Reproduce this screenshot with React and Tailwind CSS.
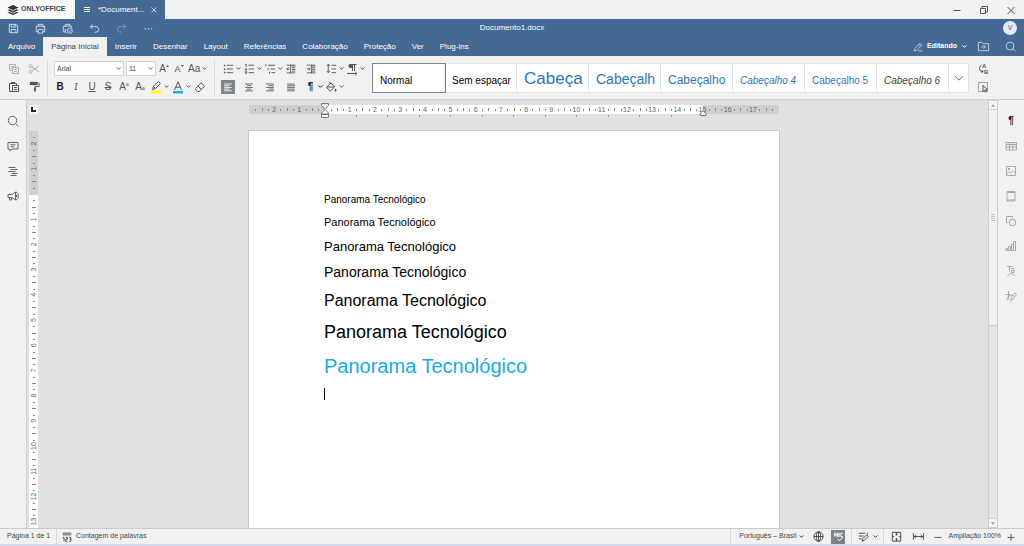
import { useLayoutEffect, useRef, useState } from 'react';
import clsx from 'clsx';

const CM = 25.2;

const menuTabs = [
  'Arquivo',
  'Página Inicial',
  'Inserir',
  'Desenhar',
  'Layout',
  'Referências',
  'Colaboração',
  'Proteção',
  'Ver',
  'Plug-ins',
];

const textStyles = [
  { name: 'Normal', preview: 'Normal', className: 'text-[10px] text-black' },
  { name: 'Sem espaçamento', preview: 'Sem espaçar', className: 'text-[10px] text-black' },
  { name: 'Cabeçalho 1', preview: 'Cabeça', className: 'text-[17px] text-[#2e74b5]' },
  { name: 'Cabeçalho 2', preview: 'Cabeçalh', className: 'text-[14px] text-[#2e74b5]' },
  { name: 'Cabeçalho 3', preview: 'Cabeçalho', className: 'text-[12px] text-[#2e74b5]' },
  { name: 'Cabeçalho 4', preview: 'Cabeçalho 4', className: 'text-[10px] italic text-[#2e74b5]' },
  { name: 'Cabeçalho 5', preview: 'Cabeçalho 5', className: 'text-[10px] text-[#2e74b5]' },
  { name: 'Cabeçalho 6', preview: 'Cabeçalho 6', className: 'text-[10px] italic text-[#404040]' },
];

const paragraphs = [
  'text-[10px] leading-[12px]',
  'text-[11px] leading-[13px]',
  'text-[13px] leading-[15px]',
  'text-[14px] leading-[17px]',
  'text-[16px] leading-[20px]',
  'text-[18px] leading-[23px]',
  'text-[20px] leading-[24px] text-[#17ade4]',
];

function Svg({ size = 14, className, children }) {
  return (
    <svg
      width={size}
      height={size}
      viewBox="0 0 14 14"
      fill="none"
      stroke="currentColor"
      className={clsx('shrink-0', className)}
      aria-hidden="true"
    >
      {children}
    </svg>
  );
}

function Chevron({ className }) {
  return (
    <svg width="5" height="5" viewBox="0 0 5 5" fill="none" stroke="currentColor" className={clsx('shrink-0', className)} aria-hidden="true">
      <path d="M.6 1.4 2.5 3.3 4.4 1.4" />
    </svg>
  );
}

const icons = {
  save: <path d="M2.5 2.5h7.5l1.5 1.5v7.5h-9zM4.5 2.5v3h5v-3M8 3v1.5M4.5 11.5v-3.5h5v3.5" />,
  print: <path d="M4.5 4.5v-2h5v2M4.5 10.5h-2v-6h9v6h-2M4.5 8h5v4h-5zM9.5 6h1" />,
  quickPrint: (
    <>
      <path d="M4.5 4.5v-2h5v2M4.5 10.5h-2v-6h9v2M6 11.5h-1.5v-3.5h1.5" />
      <circle cx="9.5" cy="9.5" r="2.7" />
      <path d="m8.3 9.5 1 1 1.6-1.8" />
    </>
  ),
  undo: <path d="M5 2.5 2.5 5 5 7.5M2.5 5h6a2.7 2.7 0 0 1 0 6H7" />,
  redo: <path d="M9 2.5 11.5 5 9 7.5M11.5 5h-6a2.7 2.7 0 0 0 0 6H7" />,
  dots: <path d="M3 7.5h1.2M6.4 7.5h1.2M9.8 7.5H11" strokeWidth="1.3" />,
  copy: <path d="M5 8.5H2.5v-6h6V5M5.5 5.5h6v6h-6zM7 7.5h3M7 9.5h3M4 4.5h3M4 6.5h1" />,
  cut: (
    <>
      <circle cx="3.6" cy="4.2" r="1.5" />
      <circle cx="3.6" cy="9.8" r="1.5" />
      <path d="m4.9 5 7 5M4.9 9l7-5.2" />
    </>
  ),
  paste: (
    <>
      <path d="M5.5 11.5h-3v-8H4M9.5 5V3.5H8M5.5 5.5h6v6h-6zM7 7.5h3M7 9.5h3" />
      <path d="M4 2h4v2H4z" fill="currentColor" stroke="none" />
    </>
  ),
  roller: (
    <>
      <path d="M2 2h8.5v3.5H2z" fill="currentColor" stroke="none" />
      <path d="M10.5 3.5H12V7H7.5v1.5" />
      <path d="M6.5 8h2v4.5h-2z" fill="currentColor" stroke="none" />
    </>
  ),
  eraser: <path d="M2.5 8.5 8 2.8l3.5 3.4-5.2 5.3H4.6L2.5 9.3zM5 6l3.6 3.5" />,
  bullets: (
    <>
      <path d="M5 3.5h7M5 7.5h7M5 11.5h7" />
      <path d="M2 3h1.5v1.5H2zM2 7h1.5v1.5H2zM2 10.5h1.5V12H2z" fill="currentColor" stroke="none" />
    </>
  ),
  numbering: <path d="M6 3.5h6M6 7.5h6M6 11.5h6M2 2.5h1.5v3M2 7.5h2v1H2M2 10.5h2v1.5H2" />,
  multilevel: <path d="M4.5 3.5h7.5M7 7.5h5M8 11.5h4M2 2.5v2M4.5 6.5v2M6 10.5v2" />,
  outdent: (
    <>
      <path d="M8 3.5h4M8 5.5h4M8 7.5h4M8 9.5h4M6.5 2v10M2 2.5h10M2 11.5h10" />
      <path d="M5.5 7H2M3.8 5.2 2 7l1.8 1.8" />
    </>
  ),
  indent: (
    <>
      <path d="M8 3.5h4M8 5.5h4M8 7.5h4M8 9.5h4M7.5 2v10M2 2.5h10M2 11.5h10" />
      <path d="M2 7h4M4.2 5.2 6 7 4.2 8.8" />
    </>
  ),
  spacing: <path d="M7 3.5h5M7 7.5h5M7 11.5h5M3.5 2.5v9M1.8 4.3l1.7-1.8 1.7 1.8M1.8 9.7l1.7 1.8 1.7-1.8" />,
  left: <path d="M2.5 3.5h9M2.5 5.5h6M2.5 7.5h9M2.5 9.5h6M2.5 11.5h9" />,
  center: <path d="M2.5 3.5h9M4.5 5.5h5M2.5 7.5h9M4.5 9.5h5M2.5 11.5h9" />,
  right: <path d="M2.5 3.5h9M5.5 5.5h6M2.5 7.5h9M5.5 9.5h6M2.5 11.5h9" />,
  justify: <path d="M2.5 3.5h9M2.5 5.5h9M2.5 7.5h9M2.5 9.5h9M2.5 11.5h9" />,
  bucket: (
    <>
      <path d="m2.5 7.5 4.2-4.7 4 3.9-4.2 4.5zM3 7h7M5 1.8l2.5 2.5" />
      <path d="M11.5 8.5c.8 1.2 1 1.6 1 2a1 1 0 0 1-2 0c0-.4.2-.8 1-2z" fill="currentColor" stroke="none" />
    </>
  ),
  pencil: <path d="m2.5 11.5.7-2.7 6.3-6.2 2 2-6.2 6.2zM8 4l2 2M7 11.5h5" />,
  folder: <path d="M1.5 11.5v-9h4l1 1.5h6v7.5zM4.5 7.5H9M7.2 5.5l2 2-2 2" />,
  search: (
    <>
      <circle cx="6.5" cy="6.5" r="4.2" />
      <path d="m9.6 9.6 2.7 2.7" />
    </>
  ),
  comment: <path d="M2 3.5h10v6.5H6l-2 2v-2H2zM4.5 5.8h5M4.5 7.8h4" />,
  headings: <path d="M2.5 3.5h7M4.5 5.5h7M2.5 7.5h7M5.5 9.5h6M4.5 11.5h6" />,
  megaphone: <path d="M2 5.5h4L9.5 3v8L6 8.5H2zM3.5 8.5V11h2V8.5M9.5 5.5c1.5 0 1.5 3 0 3M10 3c3 .6 3 7.4 0 8" />,
  table: <path d="M2 3.5h10.5v7.5H2zM2 5.5h10.5M2 8h10.5M5.5 3.5V11M9 3.5V11" />,
  image: (
    <>
      <path d="M2.5 2.5h9v9h-9zM3 9.5l2-1.8 1.5 1.3 2.7-2.5L11.5 9" />
      <path d="M4 4h2v2H4z" fill="currentColor" stroke="none" />
    </>
  ),
  header: <path d="M3 2.5h8v9.5H3zM3 3.5h8M3 11h8" />,
  shapes: (
    <>
      <path d="M4.5 8.5h-2v-6h6v2" />
      <circle cx="8.5" cy="8.5" r="3.3" />
    </>
  ),
  chart: <path d="M2 9.5h2v2H2zM4.5 7.5h2v4h-2zM7.5 5.5h2v6h-2zM9.5 2.5h2v9h-2z" />,
  textArt: <path d="M3 2.5h5.5M5.5 2.5v5M7 4.5h3v4H7.5v-2H10M3.5 12c2-3 5.5-3 7.5 0" />,
  signature: <path d="M4.5 2v7.5c0 1.5-1.5 2-1.5.5 0-2.5 3-3.5 6-4M1.5 5.5h5M6.5 11.5l1-3 3.5-4.5 1.7 1.3L9 10z" />,
  selectAll: (
    <>
      <path d="M2.5 2.5h9v9h-9z" strokeDasharray="1 1" />
      <path d="M7 5.5v6l1.5-1.3 1 2 1-.5-1-2h2z" fill="#f1f1f1" />
    </>
  ),
  wordCount: (
    <>
      <path d="M2 2.5h10M2 4.5h10" />
      <path d="M2 7.5h1.5v4.5M5.5 7.5h2v2h-2v2.5h2.3M9.5 7.5h2v4.5h-2M10 9.5h1.5" />
    </>
  ),
  globe: (
    <>
      <circle cx="7" cy="7" r="5" />
      <ellipse cx="7" cy="7" rx="2.3" ry="5" />
      <path d="M2 7h10M7 2v10" />
    </>
  ),
  spell: (
    <>
      <path d="M2.5 7V3.5h2V7M2.5 5.5h2M6 3.5h1.7V7H6zM6 5.2h1.7M11.5 3.5H9.5V7h2" />
      <path d="m6 9.5 2 2 4-4" />
    </>
  ),
  track: <path d="M2 3.5h7M2 6.5h5M2 9.5h3M5.5 12l.7-2.5L10.5 5l1.8 1.6-4.5 4.6zM12 3l-1 1" />,
  fitPage: <path d="M2.5 2.5h9v9.5h-9zM7 2.5v3M5.7 4.3 7 5.5l1.3-1.2M7 12V9M5.7 10.2 7 9l1.3 1.2M2.5 7.2h2M11.5 7.2h-2" />,
  fitWidth: <path d="M1.5 3.5v7M12.5 3.5v7M2 7h10M4.5 5 2.5 7l2 2M9.5 5l2 2-2 2" />,
  minus: <path d="M3 7.5h8" />,
  plus: <path d="M3 7.5h8M7 3.5v8" />,
  close: <path d="m4 4 6 6M10 4l-6 6" />,
};

function Icon({ name, size, className }) {
  return (
    <Svg size={size} className={className}>
      {icons[name]}
    </Svg>
  );
}

function IconButton({ label, className, onClick, children }) {
  return (
    <button
      type="button"
      aria-label={label}
      onClick={onClick}
      className={clsx('flex shrink-0 items-center justify-center', className)}
    >
      {children}
    </button>
  );
}

/* Icon with a drop-down arrow at its right */
function SplitButton({ label, className, children }) {
  return (
    <button type="button" aria-label={label} className={clsx('flex h-[14px] shrink-0 items-center', className)}>
      <span className="flex w-4 justify-center">{children}</span>
      <Chevron />
    </button>
  );
}

function Separator({ className }) {
  return <div className={clsx('w-px shrink-0 bg-[#d8d8d8]', className)} />;
}

function TitleBar() {
  return (
    <header className="flex h-[19px] shrink-0 items-stretch bg-[#f1f1f1]">
      <button type="button" className="flex w-[75px] items-center gap-[2px] bg-[#fafafa] pl-[7px] text-[7px] font-bold text-[#444]">
        <svg width="12" height="12" viewBox="0 0 12 12" aria-hidden="true" fill="#333">
          <path d="M6 1 11.5 3.6 6 6.2.5 3.6z" />
          <path d="m.5 6.1 1.7-.8L6 7.1l3.8-1.8 1.7.8L6 8.7z" />
          <path d="m.5 8.5 1.7-.8L6 9.5l3.8-1.8 1.7.8L6 11.1z" />
        </svg>
        ONLYOFFICE
      </button>
      <div className="flex w-[90px] items-center justify-between bg-[#446995] px-[5px] text-white">
        <Svg>
          <path d="M4 4.5h6M4 6.5h6M4 8.5h6" />
        </Svg>
        <span className="text-[8px]">*Document...</span>
        <IconButton label="Fechar documento" className="opacity-80">
          <Icon name="close" size={12} />
        </IconButton>
      </div>
      <div className="ml-auto flex text-[#555]">
        <IconButton label="Minimizar" className="w-[27px]">
          <Svg><path d="M3.5 7.5h7" /></Svg>
        </IconButton>
        <IconButton label="Restaurar" className="w-[27px]">
          <Svg><path d="M3.5 5.5h5v5h-5zM5 5.5v-2h5.5V9h-2" /></Svg>
        </IconButton>
        <IconButton label="Fechar" className="w-[27px]">
          <Svg><path d="m3.5 4 7 7M10.5 4l-7 7" /></Svg>
        </IconButton>
      </div>
    </header>
  );
}

function QuickAccess() {
  const actions = [
    ['save', 'Salvar'],
    ['print', 'Imprimir'],
    ['quickPrint', 'Impressão rápida'],
    ['undo', 'Desfazer'],
    ['redo', 'Refazer'],
    ['dots', 'Mais'],
  ];
  return (
    <div className="grid h-[18px] shrink-0 grid-cols-[1fr_auto_1fr] items-center bg-[#446995] text-[#d3deea]">
      <div className="flex">
        {actions.map(([icon, label]) => (
          <IconButton key={icon} label={label} className={clsx('w-[27px]', icon === 'redo' && 'opacity-40')}>
            <Icon name={icon} size={13} />
          </IconButton>
        ))}
      </div>
      <h1 className="text-[8px] text-white">Documento1.docx</h1>
      <div className="flex justify-end pr-[7px]">
        <span className="flex size-[14px] items-center justify-center rounded-full bg-[#e3ebf5] text-[7px] text-[#555]">V</span>
      </div>
    </div>
  );
}

function MenuBar({ active, onSelect }) {
  return (
    <nav className="flex h-[19px] shrink-0 items-stretch bg-[#446995] text-[8px] text-white">
      {menuTabs.map((tab) => (
        <button
          key={tab}
          type="button"
          onClick={() => onSelect(tab)}
          className={clsx('px-2 whitespace-nowrap', tab === active && 'bg-[#f1f1f1] text-[#444]')}
        >
          {tab}
        </button>
      ))}
      <div className="ml-auto flex items-center">
        <button type="button" className="flex items-center gap-[3px] pr-[3px] text-[7px] font-bold">
          <Icon name="pencil" size={12} className="opacity-70" />
          Editando
          <Chevron className="ml-[2px]" />
        </button>
        <IconButton label="Abrir local do arquivo" className="w-[27px] opacity-70">
          <Icon name="folder" size={13} />
        </IconButton>
        <IconButton label="Pesquisar" className="w-[27px] opacity-70">
          <Icon name="search" size={13} />
        </IconButton>
      </div>
    </nav>
  );
}

function Combo({ label, options, className }) {
  return (
    <div className={clsx('relative h-[15px] border border-[#d4d4d4] bg-white', className)}>
      <select aria-label={label} className="block h-full w-full appearance-none bg-transparent pt-px pl-[2px] text-[7px] text-[#444]">
        {options.map((o) => (
          <option key={o}>{o}</option>
        ))}
      </select>
      <Chevron className="pointer-events-none absolute top-[4px] right-[2px]" />
    </div>
  );
}

function FontGroup() {
  return (
    <div className="flex flex-col gap-1">
      <div className="flex h-[14px] items-center pl-[2px]">
        <Combo label="Fonte" options={['Arial', 'Calibri', 'Times New Roman']} className="mr-[2px] w-[70px]" />
        <Combo label="Tamanho" options={['11', '12', '14']} className="w-[30px]" />
        <IconButton label="Aumentar fonte" className="w-[16px]">
          <span className="text-[10px] leading-[14px]">A</span>
          <svg width="3" height="8" viewBox="0 0 3 8" fill="currentColor" aria-hidden="true"><path d="M0 2h3L1.5 0z" /></svg>
        </IconButton>
        <IconButton label="Diminuir fonte" className="w-[14px]">
          <span className="text-[9px] leading-[14px]">A</span>
          <svg width="3" height="8" viewBox="0 0 3 8" fill="currentColor" aria-hidden="true"><path d="M0 0h3L1.5 2z" /></svg>
        </IconButton>
        <button type="button" aria-label="Maiúsculas e minúsculas" className="flex items-center gap-[2px] pl-[2px] text-[10px] leading-[14px]">
          Aa
          <Chevron />
        </button>
      </div>
      <div className="flex h-[14px] items-center text-[10px] leading-[14px]">
        <IconButton label="Negrito" className="w-4 font-bold text-[#222]">B</IconButton>
        <IconButton label="Itálico" className="w-4 font-serif italic">I</IconButton>
        <IconButton label="Sublinhado" className="w-4 underline">U</IconButton>
        <IconButton label="Tachado" className="w-4 line-through">S</IconButton>
        <IconButton label="Sobrescrito" className="w-4">
          A<sup className="text-[5px]">a</sup>
        </IconButton>
        <IconButton label="Subscrito" className="w-4">
          A<sub className="text-[5px]">a</sub>
        </IconButton>
        <SplitButton label="Cor de destaque" className="w-[22px]">
          <Svg>
            <path d="M2 11h10v2.5H2z" fill="#ffff00" stroke="none" />
            <path d="m3.5 9.5.7-3L9.5 1.5l2 2-5 5zM4.5 6.5l2 2" />
          </Svg>
        </SplitButton>
        <SplitButton label="Cor da fonte" className="w-[22px]">
          <Svg>
            <path d="M2 11h10v2.5H2z" fill="#17ade4" stroke="none" />
            <path d="M3.5 10 7 1.8 10.5 10M4.8 7.2h4.4" />
          </Svg>
        </SplitButton>
        <IconButton label="Limpar estilo" className="w-4">
          <Icon name="eraser" />
        </IconButton>
      </div>
    </div>
  );
}

function ParagraphGroup() {
  const [align, setAlign] = useState('left');
  const alignments = [
    ['left', 'Alinhar à esquerda'],
    ['center', 'Centralizar'],
    ['right', 'Alinhar à direita'],
    ['justify', 'Justificar'],
  ];
  return (
    <div className="grid grid-cols-[21px_21px_21px_20px_20px_21px_21px] gap-y-1">
      <SplitButton label="Marcadores"><Icon name="bullets" size={13} /></SplitButton>
      <SplitButton label="Numeração"><Icon name="numbering" size={13} /></SplitButton>
      <SplitButton label="Lista multinível"><Icon name="multilevel" size={13} /></SplitButton>
      <IconButton label="Diminuir recuo" className="w-4"><Icon name="outdent" size={12} /></IconButton>
      <IconButton label="Aumentar recuo" className="w-4"><Icon name="indent" size={12} /></IconButton>
      <SplitButton label="Espaçamento"><Icon name="spacing" size={13} /></SplitButton>
      <SplitButton label="Direção do texto">
        <Svg>
          <path d="M9.5 9V2.5M7.5 9V2.5M6 2.5h5.5M2 11.5h10M10.3 10l1.7 1.5-1.7 1.5" />
          <path d="M7.5 2h-2a2 2 0 0 0 0 4h2z" fill="currentColor" stroke="none" />
        </Svg>
      </SplitButton>
      {alignments.map(([name, label]) => (
        <IconButton
          key={name}
          label={label}
          onClick={() => setAlign(name)}
          className={clsx('ml-px size-[14px]', align === name && 'bg-[#7d858c] text-white')}
        >
          <Icon name={name} size={12} />
        </IconButton>
      ))}
      <SplitButton label="Caracteres não imprimíveis" className="text-[10px] font-bold text-[#222]">¶</SplitButton>
      <SplitButton label="Sombreamento"><Icon name="bucket" /></SplitButton>
    </div>
  );
}

function StyleGallery() {
  const [selected, setSelected] = useState('Normal');
  return (
    <div className="flex h-[30px] min-w-0 border-y border-r border-[#dfe3ea] bg-white">
      {textStyles.map((s) => (
        <button
          key={s.name}
          type="button"
          title={s.name}
          onClick={() => setSelected(s.name)}
          className={clsx(
            'w-[72px] shrink-0 border-r border-[#e3e7ee] pr-[5px] pl-[7px] text-left text-[10px] leading-[34px]',
            selected === s.name && 'outline-1 outline-[#858585]'
          )}
        >
          <span className="block h-[28px] overflow-hidden whitespace-nowrap">
            <span className={clsx(s.className, 'leading-none')}>{s.preview}</span>
          </span>
        </button>
      ))}
      <IconButton label="Mais estilos" className="w-[19px]">
        <Svg size={12}><path d="m2.5 5 4.5 4.5L11.5 5" /></Svg>
      </IconButton>
    </div>
  );
}

function Toolbar() {
  return (
    <section className="flex h-11 shrink-0 items-center border-b border-[#cfcfcf] bg-[#f1f1f1] text-[#555]">
      <div className="grid grid-cols-[20px_20px] gap-y-1 pl-1">
        <IconButton label="Copiar" className="h-[14px] text-[#b0b0b0]"><Icon name="copy" /></IconButton>
        <IconButton label="Cortar" className="h-[14px] text-[#b0b0b0]"><Icon name="cut" /></IconButton>
        <IconButton label="Colar" className="h-[14px]"><Icon name="paste" /></IconButton>
        <IconButton label="Copiar estilo" className="h-[14px]"><Icon name="roller" size={13} /></IconButton>
      </div>
      <Separator className="mr-1 ml-[3px] h-9" />
      <FontGroup />
      <Separator className="mr-[5px] ml-[6px] h-9" />
      <ParagraphGroup />
      <div className="ml-2 min-w-0">
        <StyleGallery />
      </div>
      <div className="flex flex-col gap-1 pl-[7px]">
        <IconButton label="Substituir">
          <Svg>
            <path d="M5.5 3.5A3.2 3.2 0 0 0 5.5 9.5H7M5.5 8 7 9.5 5.5 11" />
            <text x="6" y="6" fontSize="6" fontWeight="bold" fill="currentColor" stroke="none">A</text>
            <text x="8" y="12" fontSize="6" fontWeight="bold" fill="currentColor" stroke="none">B</text>
          </Svg>
        </IconButton>
        <IconButton label="Selecionar tudo"><Icon name="selectAll" /></IconButton>
      </div>
    </section>
  );
}

/* Marks of a ruler: one number for each centimetre, ticks at each quarter */
function rulerMarks(zero, length) {
  const marks = [];
  const first = Math.ceil((-zero / CM) * 4);
  const last = Math.floor(((length - zero) / CM) * 4);
  for (let q = first; q <= last; q++) {
    const at = zero + (q * CM) / 4;
    if (q !== 0 && at > 4 && at < length - 4) marks.push({ q, at });
  }
  return marks;
}

function HorizontalRuler() {
  return (
    <svg width="530" height="16" viewBox="0 0 530 16" className="block shrink-0" aria-hidden="true">
      <rect y="3" width="530" height="9" fill="#cfcfcf" />
      <rect x="76" y="3" width="378" height="9" fill="#fff" />
      {rulerMarks(75.5, 530).map(({ q, at }) =>
        q % 4 === 0 ? (
          <text key={q} x={at} y="10" textAnchor="middle" fontSize="7" fill="#666">
            {Math.abs(q / 4)}
          </text>
        ) : (
          <path key={q} d={`M${Math.round(at) + 0.5} ${q % 2 === 0 ? 6 : 7}v${q % 2 === 0 ? 3 : 2}`} stroke="#888" />
        )
      )}
      {Array.from({ length: 11 }, (_, i) => (
        <path key={i} d={`M${Math.round(76 + (i + 1) * 31.5) - 0.5} 13v2`} stroke="#999" />
      ))}
      <g fill="#fff" stroke="#777">
        <path d="M72.5 1.5h7v2L76 7.5l-3.5-4z" />
        <path d="M76 7.5l3.5 3.5v1h-7v-1zM72.5 12.5h7v3h-7z" />
        <path d="M454 8.5l3 3.5v1.5h-6v-1.5z" />
      </g>
    </svg>
  );
}

function VerticalRuler() {
  const ref = useRef(null);
  const [length, setLength] = useState(0);

  useLayoutEffect(() => {
    const measure = () => setLength(ref.current.clientHeight);
    measure();
    window.addEventListener('resize', measure);
    return () => window.removeEventListener('resize', measure);
  }, []);

  return (
    <div ref={ref} className="min-h-0 w-[9px] flex-1 overflow-hidden bg-white">
      <svg width="9" height={length} className="block" aria-hidden="true">
        <rect width="9" height="64" fill="#cfcfcf" />
        {rulerMarks(63, length).map(({ q, at }) =>
          q % 4 === 0 ? (
            <text key={q} transform={`translate(7 ${at}) rotate(-90)`} textAnchor="middle" fontSize="7" fill="#666">
              {Math.abs(q / 4)}
            </text>
          ) : (
            <path key={q} d={`M${q % 2 === 0 ? 3 : 4} ${Math.round(at) + 0.5}h${q % 2 === 0 ? 4 : 2}`} stroke="#888" />
          )
        )}
      </svg>
    </div>
  );
}

function SideButtons({ items, className }) {
  return (
    <aside className={clsx('flex shrink-0 flex-col items-center bg-[#f1f1f1] pt-2', className)}>
      {items.map(([icon, label]) => (
        <IconButton key={label} label={label} className="h-[25px] w-full">
          {icon ? <Icon name={icon} /> : <span className="text-[10px] font-bold text-[#222]">¶</span>}
        </IconButton>
      ))}
    </aside>
  );
}

function ScrollBar() {
  return (
    <div className="flex w-[10px] shrink-0 flex-col items-center border-x border-[#cfcfcf] bg-[#e6e6e6] text-[#aaa]">
      <IconButton label="Rolar para cima" className="size-[10px] border border-[#cfcfcf] bg-[#f5f5f5]">
        <svg width="4" height="3" fill="currentColor" aria-hidden="true"><path d="M0 3h4L2 0z" /></svg>
      </IconButton>
      <div className="flex h-[216px] w-full flex-col items-center justify-center gap-px border-b border-[#cfcfcf] bg-[#f1f1f1]">
        <i className="h-px w-1 bg-[#c8c8c8]" />
        <i className="h-px w-1 bg-[#c8c8c8]" />
        <i className="h-px w-1 bg-[#c8c8c8]" />
        <i className="h-px w-1 bg-[#c8c8c8]" />
      </div>
      <IconButton label="Rolar para baixo" className="mt-auto size-[10px] border border-[#cfcfcf] bg-[#f5f5f5]">
        <svg width="4" height="3" fill="currentColor" aria-hidden="true"><path d="M0 0h4L2 3z" /></svg>
      </IconButton>
    </div>
  );
}

function Editor() {
  return (
    <main className="flex min-h-0 flex-1 bg-[#e1e1e1]">
      <SideButtons
        className="w-[27px] border-r border-[#cfcfcf] text-[#666]"
        items={[
          ['search', 'Localizar'],
          ['comment', 'Comentários'],
          ['headings', 'Títulos'],
          ['megaphone', 'Feedback e suporte'],
        ]}
      />
      <div className="flex w-[13px] shrink-0 flex-col overflow-hidden pt-[5px] pl-[2px]">
        <button type="button" aria-label="Tabulação" className="mb-[17px] flex size-[9px] shrink-0 items-center justify-center bg-[#f5f5f5]">
          <svg width="5" height="5" fill="none" stroke="#222" strokeWidth="2" aria-hidden="true"><path d="M1 0v4h4" /></svg>
        </button>
        <VerticalRuler />
      </div>
      <div className="flex min-w-0 flex-1 flex-col items-center overflow-hidden pt-[2px]">
        <HorizontalRuler />
        <article className="mt-3 w-[532px] flex-1 border border-b-0 border-[#cbcbcb] bg-white px-[75px] pt-[63px] text-black">
          {paragraphs.map((className) => (
            <p key={className} className={clsx('mb-[10px]', className)}>
              Panorama Tecnológico
            </p>
          ))}
          <div className="h-[12px] w-px bg-black" />
        </article>
      </div>
      <ScrollBar />
      <SideButtons
        className="w-[26px] text-[#aaa]"
        items={[
          [null, 'Configurações de parágrafo'],
          ['table', 'Tabela'],
          ['image', 'Imagem'],
          ['header', 'Cabeçalho e rodapé'],
          ['shapes', 'Forma'],
          ['chart', 'Gráfico'],
          ['textArt', 'Arte de texto'],
          ['signature', 'Assinatura'],
        ]}
      />
    </main>
  );
}

function StatusBar() {
  return (
    <footer className="flex h-[18px] shrink-0 items-center border-t border-b-2 border-t-[#cbcbcb] border-b-[#d3dce8] bg-[#f1f1f1] text-[7px] text-[#444]">
      <span className="w-14 pl-[7px]">Página 1 de 1</span>
      <Separator className="h-full" />
      <button type="button" className="flex items-center gap-[3px] pl-1">
        <Icon name="wordCount" size={12} />
        Contagem de palavras
      </button>
      <div className="ml-auto flex h-full items-center pr-[3px]">
        <Separator className="h-full" />
        <button type="button" className="flex items-center gap-[3px] pr-1 pl-2">
          Português – Brasil
          <Chevron />
        </button>
        <IconButton label="Idioma do documento" className="w-5"><Icon name="globe" size={13} /></IconButton>
        <IconButton label="Verificação ortográfica" className="mx-[3px] size-[14px] bg-[#7d858c] text-white"><Icon name="spell" size={13} /></IconButton>
        <Separator className="mx-[3px] h-full" />
        <SplitButton label="Controlar alterações" className="mr-[2px] w-[26px] gap-[2px]"><Icon name="track" size={13} /></SplitButton>
        <Separator className="h-full" />
        <IconButton label="Ajustar à página" className="w-6"><Icon name="fitPage" size={13} /></IconButton>
        <IconButton label="Ajustar à largura" className="w-5"><Icon name="fitWidth" size={13} /></IconButton>
        <IconButton label="Diminuir zoom" className="w-5"><Icon name="minus" size={12} /></IconButton>
        <span>Ampliação 100%</span>
        <IconButton label="Aumentar zoom" className="w-5"><Icon name="plus" size={12} /></IconButton>
      </div>
    </footer>
  );
}

export default function App() {
  const [activeTab, setActiveTab] = useState('Página Inicial');

  return (
    <div className="flex h-screen flex-col overflow-hidden font-['Liberation_Sans',Arial,sans-serif]">
      <TitleBar />
      <QuickAccess />
      <MenuBar active={activeTab} onSelect={setActiveTab} />
      <Toolbar />
      <Editor />
      <StatusBar />
    </div>
  );
}
